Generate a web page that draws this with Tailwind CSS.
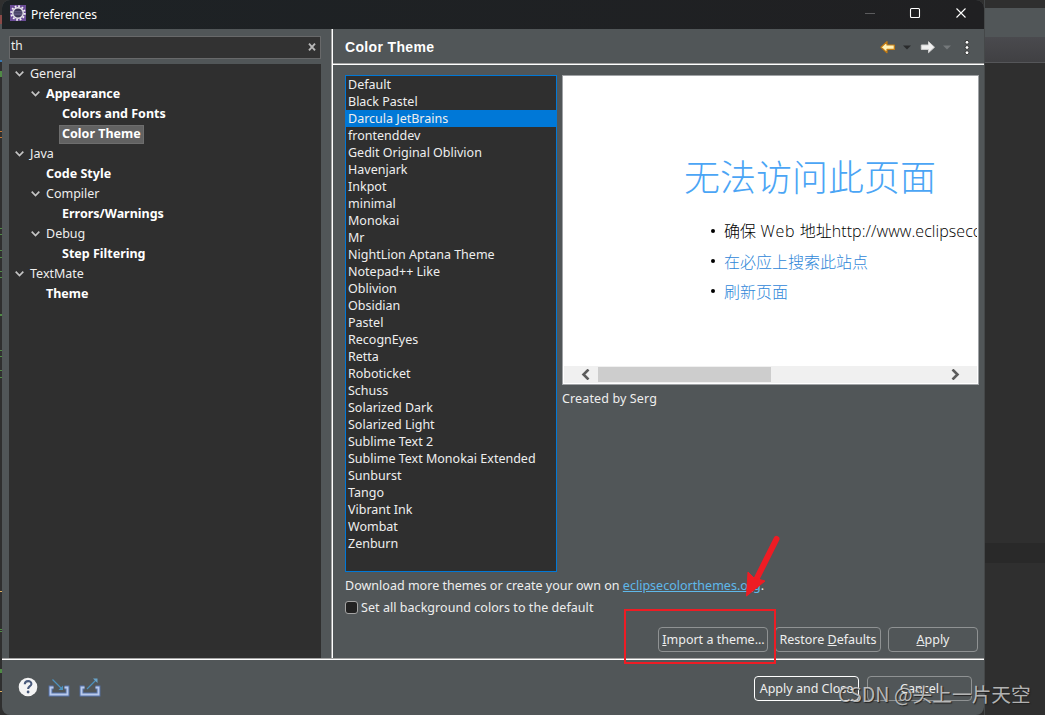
<!DOCTYPE html>
<html lang="en">

<head>
    <meta charset="UTF-8">
    <meta name="viewport" content="width=device-width, initial-scale=1.0">
    <title>Preferences</title>
    <script src="https://cdn.jsdelivr.net/npm/@tailwindcss/browser@4"></script>
</head>

<body class="relative w-[1045px] h-[715px] overflow-hidden bg-[#2f2f2f] font-['Noto_Sans','Noto_Sans_CJK_SC',sans-serif] text-[12.500px] text-[#eeeeee]">

    <div class="flex h-full">

        <!-- Editor sliver on the left -->
        <div class="w-[2px] shrink-0 flex flex-col">
            <div class="h-[15px]"></div>
            <div class="h-[9px] bg-[#8b4a48]"></div>
            <div class="h-[36px] bg-[#515658]"></div>
            <div class="h-[2px] bg-[#3a78b0]"></div>
            <div class="h-[9px]"></div>
            <div class="h-[6px] bg-[#4f8a45]"></div>
            <div class="h-[54px]"></div>
            <div class="h-[7px] border-y border-[#c57633]"></div>
            <div class="h-[90px]"></div>
            <div class="h-[7px] border-y border-[#4f8a45]"></div>
            <div class="h-[15px]"></div>
            <div class="h-[8px] border-y border-[#4f8a45]"></div>
            <div class="h-[13px]"></div>
            <div class="h-[7px] border-y border-[#4f8a45]"></div>
            <div class="h-[36px]"></div>
            <div class="h-[2px] bg-[#4f8a45]"></div>
            <div class="h-[34px]"></div>
            <div class="h-[7px] border-y border-[#4f8a45]"></div>
            <div class="h-[13px]"></div>
            <div class="h-[8px] border-y border-[#4f8a45]"></div>
            <div class="h-[213px]"></div>
            <div class="h-px bg-[#e0b060]"></div>
            <div class="h-[37px]"></div>
            <div class="h-[3px] border-y border-[#4f8a45]"></div>
            <div class="h-[37px]"></div>
            <div class="h-[4px] bg-[#4f8a45]"></div>
            <div class="h-[18px]"></div>
            <div class="h-px bg-[#e0b060]"></div>
        </div>

        <!-- Preferences dialog -->
        <div class="w-[982px] shrink-0 flex flex-col rounded-lg overflow-hidden bg-[#515658]">

            <!-- Title bar -->
            <div class="h-[29px] shrink-0 flex items-center pl-2 bg-linear-to-r from-[#1d2225] to-[#202022]">
                <svg class="w-4 h-4 -mt-[3px]" viewBox="0 0 16 16">
                    <rect width="16" height="16" fill="#6a4c96" />
                    <circle cx="8" cy="8" r="6.700" fill="none" stroke="#f2f0f4" stroke-width="2" stroke-dasharray="1.750 1.758" />
                    <circle cx="8" cy="8" r="5.200" fill="#3a3555" stroke="#e4e1e8" stroke-width="1.500" />
                    <path d="M3.800 6.700h8.400M3.500 8.200h9M3.800 9.700h8.400" stroke="#77709a" stroke-width=".7" />
                </svg>
                <span class="ml-[5px] text-[12px] text-white tracking-[-0.080px]">Preferences</span>
                <svg class="ml-auto w-[119px] h-[29px]" viewBox="0 0 119 29" fill="none">
                    <path d="M0 13.5h10" stroke="#5b5b5d" />
                    <rect x="45.5" y="8.5" width="9" height="9" rx="1" stroke="#fff" stroke-width="1.1" />
                    <path d="M91.5 8.500l9 9M100.500 8.500l-9 9" stroke="#fff" stroke-width="1.1" />
                </svg>
            </div>

            <div class="h-[629px] shrink-0 flex">

                <!-- Filter and page tree -->
                <div class="w-[329px] shrink-0 flex flex-col pl-[7px] pr-[10px] pt-[7px]">
                    <div class="h-[23px] shrink-0 flex items-center justify-between border border-[#68696a] bg-[#323232] pl-[1px] pr-[4px]">
                        <span class="-mt-[3px] text-[12px]">th</span>
                        <svg class="w-2 h-2 -mt-px" viewBox="0 0 8 8"><path d="M1 .7l6 6.600M7 .7l-6 6.600" stroke="#b8b8b8" stroke-width="1.900" /></svg>
                    </div>
                    <div id="tree" class="mt-[5px] grow bg-[#2f2f2f]"></div>
                </div>

                <!-- Sash -->
                <div class="w-[2px] shrink-0 border-l border-[#a4a4a4] bg-white"></div>

                <!-- Page -->
                <div class="grow flex flex-col">
                    <div class="h-[36px] shrink-0 flex items-center border-b border-white shadow-[inset_0_-1px_0_#a4a4a4] pl-[12px]">
                        <h1 class="mt-[2px] font-['Liberation_Sans',sans-serif] font-bold text-[14px] text-white tracking-[0.350px]">Color Theme</h1>
                        <svg class="ml-auto mr-[8px] w-[96px] h-[20px]" viewBox="0 0 96 20">
                            <path d="M1 10.200L7 4.700v3.300h7.300v4.400H7v3.300z" fill="#fff2b8" stroke="#c47a10" stroke-width="1.200" stroke-linejoin="round" />
                            <path d="M23 8.500h8l-4 4z" fill="#2a2b2c" />
                            <path d="M54.500 10.200L48.500 4.700v3.300h-7.200v4.400h7.200v3.300z" fill="#f0f0f0" stroke="#cfcfcf" stroke-linejoin="round" />
                            <path d="M63 8.500h8l-4 4z" fill="#75797b" />
                            <g fill="#fff" stroke="#2b2c2d" stroke-width=".9">
                                <circle cx="87" cy="5.300" r="1.900" />
                                <circle cx="87" cy="10.500" r="1.900" />
                                <circle cx="87" cy="15.700" r="1.900" />
                            </g>
                        </svg>
                    </div>

                    <div class="flex gap-[5px] pl-[12px] pt-[10px]">
                        <ul id="themes" class="w-[212px] h-[497px] shrink-0 border border-[#0078d7] bg-[#2f2f2f]"></ul>
                        <div>
                            <div class="w-[417px] h-[310px] flex flex-col overflow-hidden border border-[#a0a3a6] bg-white p-px font-['Noto_Sans_CJK_SC',sans-serif] font-light text-black">
                                <h2 class="mt-[73px] ml-[120px] h-[50px] leading-[50px] text-[36px] text-[#4ba5f5] whitespace-nowrap">无法访问此页面</h2>
                                <ul class="mt-[15px] ml-[146px] overflow-hidden text-[16px] leading-[30px] whitespace-nowrap">
                                    <li class="flex items-center"><i class="w-[4px] h-[4px] shrink-0 ml-[1px] mr-[9px] rounded-full bg-black"></i><span>确保 <span class="font-['Open_Sans',sans-serif] ml-px mr-px tracking-[0.700px]">Web</span> 地址<span class="font-['Open_Sans',sans-serif] tracking-[0.060px]">http://www.eclipsecolorthemes.org</span></span></li>
                                    <li class="flex items-center"><i class="w-[4px] h-[4px] shrink-0 ml-[1px] mr-[9px] rounded-full bg-black"></i><span class="text-[#2f87d8]">在必应上搜索此站点</span></li>
                                    <li class="flex items-center"><i class="w-[4px] h-[4px] shrink-0 ml-[1px] mr-[9px] rounded-full bg-black"></i><span class="text-[#2f87d8]">刷新页面</span></li>
                                </ul>
                                <div class="mt-auto h-[17px] shrink-0 flex items-center bg-[#f0f0f0]">
                                    <svg class="ml-[17px] w-[9px] h-[11px]" viewBox="0 0 9 11"><path d="M7.500 .5l-5 5 5 5" fill="none" stroke="#5c5c5c" stroke-width="2.600" /></svg>
                                    <div class="ml-[8px] w-[173px] h-[15px] bg-[#cdcdcd]"></div>
                                    <svg class="ml-auto mr-[17px] w-[9px] h-[11px]" viewBox="0 0 9 11"><path d="M1.500 .5l5 5-5 5" fill="none" stroke="#5c5c5c" stroke-width="2.600" /></svg>
                                </div>
                            </div>
                            <p class="mt-[4px] leading-5 tracking-[0.130px]">Created by Serg</p>
                        </div>
                    </div>

                    <p class="mt-[4px] pl-[12px] leading-5 tracking-[0.020px] whitespace-nowrap">Download more themes or create your own on <a class="text-[#5fb8ea] underline">eclipsecolorthemes.org</a>.</p>
                    <label class="mt-[2px] pl-[12px] flex items-center gap-[3px] leading-5 tracking-[0.050px]"><span class="w-[13px] h-[13px] -mt-px rounded-[3px] border border-[#a4a4a4] bg-[#222222]"></span>Set all background colors to the default</label>

                    <div class="mt-[9px] flex justify-end gap-[7px] pr-[6px]">
                        <button class="w-[110px] h-[25px] pt-px pl-px rounded border border-[#8f9293] whitespace-nowrap"><u>I</u>mport a theme...</button>
                        <button class="w-[106px] h-[25px] pt-px rounded border border-[#8f9293] whitespace-nowrap">Restore <u>D</u>efaults</button>
                        <button class="w-[90px] h-[25px] pt-px rounded border border-[#8f9293]"><u>A</u>pply</button>
                    </div>
                </div>
            </div>

            <!-- Button bar -->
            <div class="h-[57px] shrink-0 flex items-center border-t border-[#a4a4a4] shadow-[inset_0_1px_0_#fff] pl-[16px] pr-[12px]">
                <svg class="w-[84px] h-[22px]" viewBox="0 0 84 22">
                    <circle cx="10" cy="11" r="9.300" fill="#f4f4f4" />
                    <path d="M6.800 8.300c0-4.200 6.600-4.200 6.600-.4 0 2.300-3.300 2.300-3.300 5.100" fill="none" stroke="#4a5b7c" stroke-width="2.100" />
                    <circle cx="10.100" cy="16" r="1.400" fill="#4a5b7c" />
                    <g fill="none">
                        <path d="M35.500 11.500h-3v7h17v-7h-3" stroke="#5674ad" stroke-width="3.800" />
                        <path d="M35.500 11.500h-3v7h17v-7h-3" stroke="#b9caeb" stroke-width="1.900" />
                        <path d="M34.500 3.500l9 9" stroke="#4d91bd" stroke-width="1.300" />
                        <path d="M45 9.500v4.500h-4.500z" fill="#4d91bd" />
                        <path d="M66.500 11.500h-3v7h17v-7h-3" stroke="#5674ad" stroke-width="3.800" />
                        <path d="M66.500 11.500h-3v7h17v-7h-3" stroke="#b9caeb" stroke-width="1.900" />
                        <path d="M69 13l9-9" stroke="#4d91bd" stroke-width="1.300" />
                        <path d="M75 2.500h4.500v4.500z" fill="#6aa5cc" />
                    </g>
                </svg>
                <div class="ml-auto flex gap-[8px] mt-[3px]">
                    <button class="w-[105px] h-[25px] pt-px rounded border border-white whitespace-nowrap">Apply and Close</button>
                    <button class="w-[105px] h-[25px] pt-px rounded border border-[#8f9293]">Cancel</button>
                </div>
            </div>
        </div>

        <!-- Editor visible behind the dialog -->
        <div class="grow border-l border-[#454849]">
            <div class="h-[8px]"></div>
            <div class="h-[29px] bg-[#515658]"></div>
            <div class="h-[26px] border-b border-[#555659] bg-linear-to-b from-[#4a4a4e] to-[#404043]"></div>
            <div class="h-[480px]"></div>
            <div class="h-[20px] bg-[#292929]"></div>
        </div>
    </div>

    <!-- Annotation -->
    <div class="absolute left-[624px] top-[609px] w-[152px] h-[55px] border-2 border-[#ee1c24]"></div>
    <svg class="absolute left-[740px] top-[530px] w-[45px] h-[70px]" viewBox="0 0 45 70">
        <path d="M36.500 9L17 48" stroke="#ee1c24" stroke-width="6" stroke-linecap="round" />
        <path d="M6.500 66l1.500-24 6 6 11 3z" fill="#ee1c24" stroke="#ee1c24" />
    </svg>

    <!-- Watermark -->
    <div class="absolute left-[838px] top-[680px] leading-7 text-[19.700px] text-[#d8d8d8]/80 font-['Noto_Sans_CJK_SC',sans-serif] whitespace-nowrap [text-shadow:1px_1px_1px_#222]">CSDN @头上一片天空</div>

    <script>
        const pages = [
            { text: "General", pad: "pl-[6px]", open: true },
            { text: "Appearance", pad: "pl-[22px]", open: true, bold: true },
            { text: "Colors and Fonts", pad: "pl-[50px]", bold: true },
            { text: "Color Theme", pad: "pl-[50px]", bold: true, selected: true },
            { text: "Java", pad: "pl-[6px]", open: true },
            { text: "Code Style", pad: "pl-[34px]", bold: true },
            { text: "Compiler", pad: "pl-[22px]", open: true },
            { text: "Errors/Warnings", pad: "pl-[50px]", bold: true },
            { text: "Debug", pad: "pl-[22px]", open: true },
            { text: "Step Filtering", pad: "pl-[50px]", bold: true },
            { text: "TextMate", pad: "pl-[6px]", open: true },
            { text: "Theme", pad: "pl-[34px]", bold: true }
        ];
        const arrow = '<svg class="w-[9px] h-[6px] mr-[3px]" viewBox="0 0 9 6"><path d="M.7 .7l3.800 3.800L8.300 .7" fill="none" stroke="#c4c4c4" stroke-width="1.700"/></svg>';

        document.getElementById("tree").innerHTML = pages.map(p => `
            <div class="h-5 flex items-center ${p.pad}">
                ${p.open ? arrow : ""}
                <span class="h-[19px] leading-[18px] px-[3px] ${p.bold ? "font-bold text-white" : ""} ${p.selected ? "bg-[#626262] outline outline-[#6e6e6e] -outline-offset-1" : ""}">${p.text}</span>
            </div>`).join("");

        const themes = ["Default", "Black Pastel", "Darcula JetBrains", "frontenddev", "Gedit Original Oblivion",
            "Havenjark", "Inkpot", "minimal", "Monokai", "Mr", "NightLion Aptana Theme", "Notepad++ Like",
            "Oblivion", "Obsidian", "Pastel", "RecognEyes", "Retta", "Roboticket", "Schuss", "Solarized Dark",
            "Solarized Light", "Sublime Text 2", "Sublime Text Monokai Extended", "Sunburst", "Tango",
            "Vibrant Ink", "Wombat", "Zenburn"];

        document.getElementById("themes").innerHTML = themes.map(t =>
            `<li class="h-[17px] leading-[17px] pl-[2px] ${t === "Darcula JetBrains" ? "bg-[#0078d7]" : ""}">${t}</li>`).join("");
    </script>
</body>

</html>
